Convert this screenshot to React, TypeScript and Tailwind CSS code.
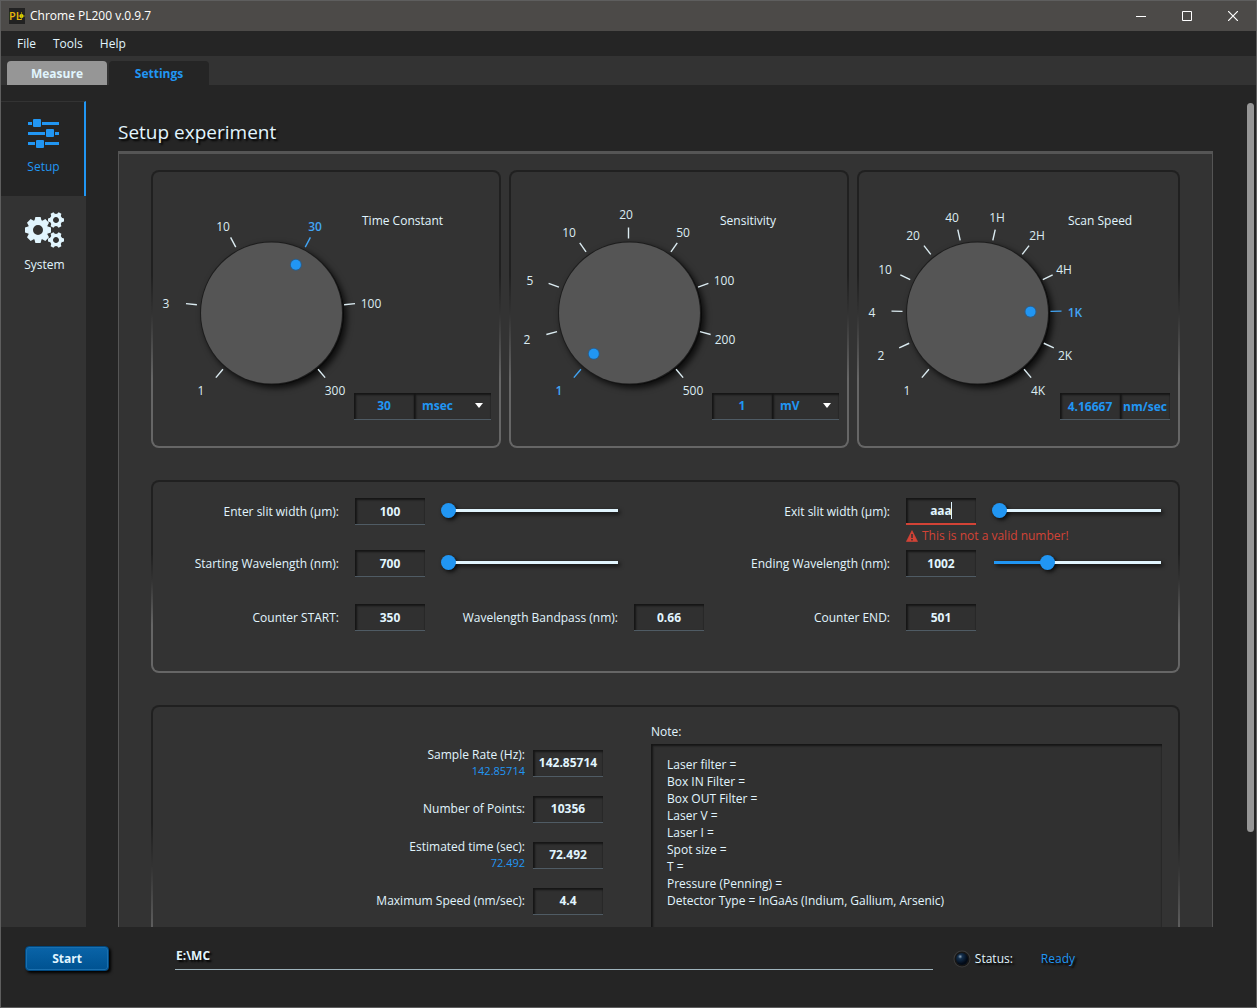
import React, { useState } from "react";

interface DialMark {
  label: string;
  x: number;
  y: number;
}

const timeMarks: DialMark[] = [
  { label: "1", x: 50, y: 221 },
  { label: "3", x: 15, y: 134 },
  { label: "10", x: 72, y: 57 },
  { label: "30", x: 164, y: 57 },
  { label: "100", x: 220, y: 134 },
  { label: "300", x: 184, y: 221 },
];

const sensitivityMarks: DialMark[] = [
  { label: "1", x: 50, y: 221 },
  { label: "2", x: 18, y: 170 },
  { label: "5", x: 21, y: 111 },
  { label: "10", x: 60, y: 63 },
  { label: "20", x: 117, y: 45 },
  { label: "50", x: 174, y: 63 },
  { label: "100", x: 215, y: 111 },
  { label: "200", x: 216, y: 170 },
  { label: "500", x: 184, y: 221 },
];

const speedMarks: DialMark[] = [
  { label: "1", x: 50, y: 221 },
  { label: "2", x: 24, y: 186 },
  { label: "4", x: 15, y: 143 },
  { label: "10", x: 28, y: 100 },
  { label: "20", x: 56, y: 66 },
  { label: "40", x: 95, y: 48 },
  { label: "1H", x: 140, y: 48 },
  { label: "2H", x: 180, y: 66 },
  { label: "4H", x: 207, y: 100 },
  { label: "1K", x: 218, y: 143 },
  { label: "2K", x: 208, y: 186 },
  { label: "4K", x: 181, y: 221 },
];

const defaultNote = `Laser filter =
Box IN Filter =
Box OUT Filter =
Laser V =
Laser I =
Spot size =
T =
Pressure (Penning) =
Detector Type = InGaAs (Indium, Gallium, Arsenic)`;

const fieldClass =
  "h-[27px] w-full min-w-0 appearance-none rounded-none border-b border-[#4f5b64] bg-[#303030] text-center text-xs font-bold outline-none shadow-[inset_2px_2px_2px_#161616,inset_-1px_0_1px_#282828]";

// Regulator dial: marks are spread over 280 degrees, starting at the lower left
function Dial({ name, marks, selected }: { name: string; marks: DialMark[]; selected: number }) {
  const cx = 119.5;
  const cy = 142.5;
  const point = (i: number, r: number) => {
    const a = ((-50 + (280 / (marks.length - 1)) * i) * Math.PI) / 180;
    return { x: cx - r * Math.cos(a), y: cy - r * Math.sin(a) };
  };
  const dot = point(selected, 54);

  return (
    <svg
      viewBox="2 2 201 274"
      className="h-[274px] w-[201px] shrink-0 overflow-visible"
      role="img"
      aria-label={name}
    >
      <g className="drop-shadow-[3px_3px_3px_rgba(0,0,0,0.75)]">
        <circle cx="122" cy="144" r="71" fill="#0a0a0a" />
        <circle cx="120.5" cy="143" r="71.5" fill="#1d1d1d" />
      </g>
      <circle cx="120.5" cy="143" r="70.5" fill="#555" />
      <circle cx={dot.x} cy={dot.y} r="6" fill="#2b5f8c" />
      <circle cx={dot.x} cy={dot.y} r="5" fill="#2196f3" />
      {marks.map((mark, i) => {
        const inner = point(i, 74);
        const outer = point(i, 85);
        const color = i === selected ? "#42a5f5" : "#dcecf2";
        return (
          <g key={mark.label}>
            <line x1={inner.x} y1={inner.y} x2={outer.x} y2={outer.y} stroke={color} strokeWidth="1.4" />
            <text
              x={mark.x}
              y={mark.y + 4}
              fill={color}
              textAnchor="middle"
              className={i === selected ? "text-xs font-semibold" : "text-xs"}
            >
              {mark.label}
            </text>
          </g>
        );
      })}
    </svg>
  );
}

function Card({ children, className = "" }: { children: React.ReactNode; className?: string }) {
  return (
    <section className="rounded-lg bg-[linear-gradient(to_bottom,#202020_38%,#333_52%,#666_75%)] p-[2px]">
      <div className={`rounded-md bg-[#333] ${className}`}>{children}</div>
    </section>
  );
}

interface DialCardProps {
  title: string;
  marks: DialMark[];
  selected: number;
  value: string;
  unit: string;
  units?: string[];
}

function DialCard({ title, marks, selected, value, unit, units }: DialCardProps) {
  return (
    <Card className="flex pr-2">
      <Dial name={title} marks={marks} selected={selected} />
      <div className="flex min-w-0 flex-1 flex-col justify-between pt-10 pb-[26px]">
        <h2 className="pl-2 text-xs leading-[18px]">{title}</h2>
        <div className="flex text-[#2196f3]">
          <div className="w-[60px] shrink-0">
            <input aria-label={`${title} value`} defaultValue={value} className={fieldClass} />
          </div>
          <div className="relative min-w-0 flex-1">
            {units ? (
              <>
                <select
                  aria-label={`${title} unit`}
                  defaultValue={unit}
                  className={`${fieldClass} pl-2 text-left`}
                >
                  {units.map((u) => (
                    <option key={u}>{u}</option>
                  ))}
                </select>
                <svg
                  viewBox="0 0 8 5"
                  className="pointer-events-none absolute top-[11px] right-2 h-[5px] w-2"
                  fill="#fff"
                >
                  <path d="M0 0h8L4 5z" />
                </svg>
              </>
            ) : (
              <input aria-label={`${title} unit`} readOnly value={unit} className={fieldClass} />
            )}
          </div>
        </div>
      </div>
    </Card>
  );
}

function Slider({ name, initial }: { name: string; initial: number }) {
  const [value, setValue] = useState(initial);
  return (
    <input
      type="range"
      aria-label={name}
      min={0}
      max={100}
      value={value}
      onChange={(e) => setValue(Number(e.target.value))}
      style={{ "--fill": `${value}%` } as React.CSSProperties}
      className="h-[25px] w-full appearance-none self-start bg-transparent drop-shadow-[2px_2px_2px_rgba(0,0,0,0.8)] [&::-webkit-slider-runnable-track]:h-[3px] [&::-webkit-slider-runnable-track]:bg-[linear-gradient(to_right,transparent_2px,#2196f3_2px,#2196f3_var(--fill),#e1f5fe_var(--fill))] [&::-webkit-slider-thumb]:-mt-[6px] [&::-webkit-slider-thumb]:size-[15px] [&::-webkit-slider-thumb]:appearance-none [&::-webkit-slider-thumb]:rounded-full [&::-webkit-slider-thumb]:bg-[#2196f3]"
    />
  );
}

interface GearProps {
  cx: number;
  cy: number;
  r: number;
  hole: number;
  teeth: number;
  turn?: number;
}

function Gear({ cx, cy, r, hole, teeth, turn = 0 }: GearProps) {
  const step = 360 / teeth;
  const body = r * 0.78;
  return (
    <g transform={`translate(${cx} ${cy})`}>
      <circle r={(body + hole) / 2} fill="none" stroke="currentColor" strokeWidth={body - hole} />
      {Array.from({ length: teeth }, (_, i) => (
        <path
          key={i}
          transform={`rotate(${turn + i * step})`}
          fill="currentColor"
          d={`M${-r * 0.28} ${-r * 0.7}L${-r * 0.2} ${-r}H${r * 0.2}L${r * 0.28} ${-r * 0.7}z`}
        />
      ))}
    </g>
  );
}

function SlidersIcon() {
  return (
    <svg viewBox="0 0 31 30" className="h-[30px] w-[31px]" fill="currentColor">
      <path d="M0 4h4v3H0zM14 4h17v3H14zM0 14h17v3H0zM27 14h4v3h-4zM0 24h7v3H0zM17 24h14v3H17z" />
      <rect x="5" y="1" width="8" height="8" rx="1" />
      <rect x="18" y="11" width="8" height="8" rx="1" />
      <rect x="8" y="22" width="8" height="8" rx="1" />
    </svg>
  );
}

function GearsIcon() {
  return (
    <svg viewBox="0 0 40 36" className="h-9 w-10">
      <Gear cx={13} cy={18} r={13} hole={5} teeth={8} />
      <Gear cx={31} cy={8} r={8} hole={3} teeth={6} turn={30} />
      <Gear cx={31} cy={28} r={8} hole={3} teeth={6} turn={30} />
    </svg>
  );
}

function TitleBar() {
  return (
    <header className="flex h-[30px] shrink-0 items-center bg-[#4c4a48] pl-2">
      <svg viewBox="0 0 16 16" className="size-4">
        <rect width="16" height="16" fill="#222" />
        <text x="0" y="12" className="text-[11px] font-semibold" fill="#e8b80c">
          PL
        </text>
        <circle cx="12.500" cy="8" r="2" fill="#f4f000" />
        <path d="M9 8h7M12.500 4v8" stroke="#b8a800" strokeWidth=".7" />
      </svg>
      <h1 className="flex-1 pl-[5px] text-xs text-white">Chrome PL200 v.0.9.7</h1>
      <button aria-label="Minimize" className="flex h-full w-[46px] items-center justify-center">
        <svg viewBox="0 0 10 10" className="size-[10px]" stroke="#fff">
          <path d="M0 5.500h10" />
        </svg>
      </button>
      <button aria-label="Maximize" className="flex h-full w-[46px] items-center justify-center">
        <svg viewBox="0 0 10 10" className="size-[10px]" fill="none" stroke="#fff">
          <path d="M.5.5h9v9h-9z" />
        </svg>
      </button>
      <button aria-label="Close" className="flex h-full w-[46px] items-center justify-center">
        <svg viewBox="0 0 10 10" className="size-[10px]" stroke="#fff" strokeWidth="1.200">
          <path d="M0 0l10 10M10 0L0 10" />
        </svg>
      </button>
    </header>
  );
}

const rangeRow = "grid grid-cols-[186px_70px_177px_70px_1fr_70px_169px] items-center gap-x-4";

function ScanRanges() {
  return (
    <Card className="pt-4 pr-[17px] pb-10 text-xs">
      <div className={rangeRow}>
        <label htmlFor="enter-slit" className="text-right">Enter slit width (µm):</label>
        <input id="enter-slit" defaultValue="100" className={fieldClass} />
        <Slider name="Enter slit width" initial={0} />
        <label htmlFor="exit-slit" className="col-start-5 text-right">Exit slit width (µm):</label>
        <div className="relative">
          <input
            id="exit-slit"
            defaultValue="aaa"
            aria-invalid
            aria-describedby="exit-slit-error"
            className={`${fieldClass} border-b-2 border-[#d34336]`}
          />
          <span className="absolute top-1 left-[45px] h-[17px] w-px bg-[#e1f5fe]" />
        </div>
        <Slider name="Exit slit width" initial={0} />
      </div>

      <div className={`${rangeRow} h-[25px]`}>
        <p
          id="exit-slit-error"
          className="col-span-2 col-start-6 flex items-center gap-1 pb-[3px] whitespace-nowrap text-[#d34336]"
        >
          <svg viewBox="0 0 12 12" className="size-3 shrink-0">
            <path d="M6 .6L11.600 11.500H.4z" fill="#d34336" stroke="#d34336" strokeWidth=".6" strokeLinejoin="round" />
            <path d="M6 4v4M6 9v1.500" stroke="#333" strokeWidth="1.500" />
          </svg>
          This is not a valid number!
        </p>
      </div>

      <div className={rangeRow}>
        <label htmlFor="start-wave" className="text-right">Starting Wavelength (nm):</label>
        <input id="start-wave" defaultValue="700" className={fieldClass} />
        <Slider name="Starting wavelength" initial={0} />
        <label htmlFor="end-wave" className="col-start-5 text-right">Ending Wavelength (nm):</label>
        <input id="end-wave" defaultValue="1002" className={fieldClass} />
        <Slider name="Ending wavelength" initial={31} />
      </div>

      <div className={`${rangeRow} mt-[27px]`}>
        <label htmlFor="counter-start" className="text-right">Counter START:</label>
        <input id="counter-start" defaultValue="350" className={fieldClass} />
        <label htmlFor="bandpass" className="text-right">Wavelength Bandpass (nm):</label>
        <input id="bandpass" defaultValue="0.66" className={fieldClass} />
        <label htmlFor="counter-end" className="text-right">Counter END:</label>
        <input id="counter-end" defaultValue="501" className={fieldClass} />
      </div>
    </Card>
  );
}

const sampling = [
  { id: "rate", label: "Sample Rate (Hz):", hint: "142.85714", value: "142.85714" },
  { id: "points", label: "Number of Points:", hint: "", value: "10356" },
  { id: "time", label: "Estimated time (sec):", hint: "72.492", value: "72.492" },
  { id: "speed", label: "Maximum Speed (nm/sec):", hint: "", value: "4.4" },
];

function Sampling() {
  return (
    <Card className="flex gap-12 pr-4 pb-6 text-xs">
      <div className="flex flex-col gap-[10px] pt-[38px]">
        {sampling.map((row) => (
          <div key={row.id} className="grid h-9 grid-cols-[372px_70px] items-center gap-x-2 text-right">
            <label htmlFor={row.id} className="leading-4">
              {row.label}
              {row.hint && <span className="block text-[11px] text-[#2196f3]">{row.hint}</span>}
            </label>
            <input id={row.id} defaultValue={row.value} className={fieldClass} />
          </div>
        ))}
      </div>
      <div className="flex min-w-0 flex-1 flex-col pt-[17px]">
        <label htmlFor="note" className="h-5 leading-4">Note:</label>
        <textarea
          id="note"
          defaultValue={defaultNote}
          className="h-[246px] w-full resize-none bg-[#303030] px-4 py-3 leading-[17px] shadow-[inset_2px_2px_2px_#161616,inset_-1px_0_1px_#282828] outline-none"
        />
      </div>
    </Card>
  );
}

export default function App() {
  return (
    <div className="flex h-screen flex-col overflow-hidden border border-[#5e5e5e] bg-[#252525] font-['Open_Sans','Noto_Sans',sans-serif] text-[#e1f5fe]">
      <TitleBar />

      <nav className="flex h-[25px] shrink-0 items-center pl-[7px] text-xs">
        <button className="px-[9px]">File</button>
        <button className="px-2">Tools</button>
        <button className="px-[9px]">Help</button>
      </nav>

      <div role="tablist" className="flex h-[29px] shrink-0 items-end gap-[2px] bg-[#333] pl-[6px] text-xs font-bold">
        <button role="tab" className="h-6 w-[100px] rounded-t bg-[#969696] pt-[2px]">Measure</button>
        <button role="tab" aria-selected className="h-6 w-[100px] rounded-t bg-[#252525] pt-[2px] text-[#2196f3]">
          Settings
        </button>
      </div>

      <div className="flex min-h-0 flex-1">
        <aside className="mt-4 flex w-[85px] shrink-0 flex-col bg-[#333] text-xs">
          <button className="flex h-[95px] flex-col items-center gap-[11px] border-t border-r-2 border-t-[#333] border-r-[#2196f3] bg-[#252525] pt-4 pl-[2px] text-[#2196f3]">
            <SlidersIcon />
            Setup
          </button>
          <button className="flex flex-col items-center gap-[9px] pt-4 pl-[2px]">
            <GearsIcon />
            System
          </button>
        </aside>

        <main className="min-w-0 flex-1 overflow-y-auto pr-[34px] pl-8 [scrollbar-width:none]">
          <h1 className="pt-[33px] pb-[5px] text-[19px] leading-7 [text-shadow:2px_2px_2px_#000]">
            Setup experiment
          </h1>
          <div className="flex flex-col gap-8 border-x border-t-[3px] border-[#555] bg-[#333] px-8 pt-4 pb-8">
            <div className="grid grid-cols-[350fr_340fr_323fr] gap-2">
              <DialCard
                title="Time Constant"
                marks={timeMarks}
                selected={3}
                value="30"
                unit="msec"
                units={["msec", "sec"]}
              />
              <DialCard
                title="Sensitivity"
                marks={sensitivityMarks}
                selected={0}
                value="1"
                unit="mV"
                units={["µV", "mV"]}
              />
              <DialCard title="Scan Speed" marks={speedMarks} selected={9} value="4.16667" unit="nm/sec" />
            </div>
            <ScanRanges />
            <Sampling />
          </div>
        </main>

        <div className="w-[9px] shrink-0 pt-[18px] pb-[2px]">
          <div className="h-[88.7%] w-[7px] rounded-full bg-[#969696]" />
        </div>
      </div>

      <footer className="flex h-20 shrink-0 items-start pr-[181px] pl-6 text-xs">
        <button className="mt-[19px] h-[25px] w-[84px] rounded-sm border border-[#00487f] bg-linear-to-b from-[#0a64a8] to-[#005291] font-bold shadow-[inset_0_0_0_1px_#1a6fae,2px_2px_3px_#000]">
          Start
        </button>
        <input
          aria-label="Output folder"
          defaultValue="E:\MC"
          className="mt-4 ml-[66px] h-[27px] min-w-0 flex-1 border-b border-[#9fb4bd] pb-[2px] pl-px font-bold outline-none [text-shadow:2px_2px_2px_#000]"
        />
        <div className="ml-5 flex h-16 items-center">
          <svg viewBox="0 0 18 18" className="size-[18px]">
            <defs>
              <radialGradient id="led" cx="35%" cy="30%" r="60%">
                <stop offset="0" stopColor="#8fa3b5" />
                <stop offset=".3" stopColor="#14304e" />
                <stop offset="1" stopColor="#020b18" />
              </radialGradient>
            </defs>
            <circle cx="9" cy="9" r="8.500" fill="#3c3c3c" />
            <circle cx="9" cy="9" r="7.500" fill="#161616" />
            <circle cx="9" cy="9" r="6" fill="url(#led)" />
          </svg>
          <span className="w-[70px] pl-1 [text-shadow:2px_2px_2px_#000]">Status:</span>
          <span className="text-[#2196f3] [text-shadow:2px_2px_2px_#000]">Ready</span>
        </div>
      </footer>
    </div>
  );
}
